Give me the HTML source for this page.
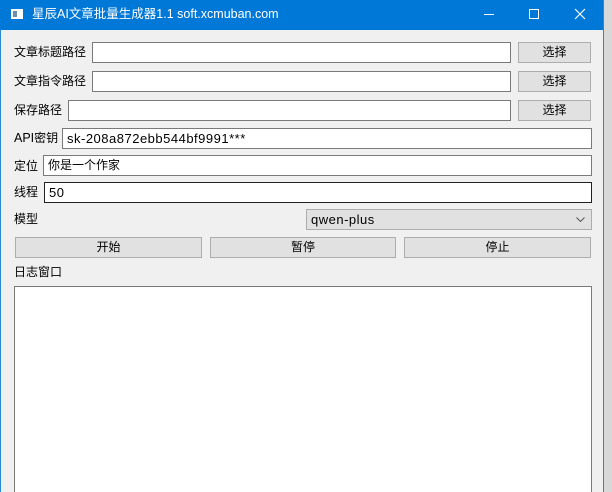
<!DOCTYPE html>
<html style="overflow:hidden;height:492px"><head><meta charset="utf-8"><style>
body{margin:0;width:612px;height:492px;background:#d8d8d8;position:relative;overflow:hidden;font-family:"Liberation Sans","Noto Sans CJK SC",sans-serif;font-size:12px;color:#000}
.win{position:absolute;left:0;top:0;width:602px;height:492px;background:#f0f0f0;border-right:1px solid #2b88d8;border-left:1px solid #2b88d8}
.tb{position:absolute;left:0;top:0;width:603px;height:30px;background:#0078d7;color:#fff}
.a{position:absolute}
.in{position:absolute;background:#fff;border:1px solid #7a7a7a;box-sizing:border-box;height:21px;line-height:19px;padding-left:4px;font-size:12px}
.lt{font-size:13px;letter-spacing:0.5px}
.bt{position:absolute;background:#e1e1e1;border:1px solid #adadad;box-sizing:border-box;height:21px;line-height:19px;text-align:center}
.lb{position:absolute;line-height:16px}
</style></head><body>
<div class="win"></div>
<div class="tb">
 <div class="a" style="left:11px;top:9px;width:12px;height:10px;background:#fff"></div>
 <div class="a" style="left:13px;top:11px;width:4px;height:6px;background:#6a8fb0"></div>
 <div class="a" style="left:32px;top:6px;font-size:12.5px;line-height:17px">星辰AI文章批量生成器1.1 soft.xcmuban.com</div>
 <div class="a" style="left:484px;top:14px;width:10px;height:1px;background:#fff"></div>
 <div class="a" style="left:529px;top:9px;width:8px;height:8px;border:1px solid #fff"></div>
 <svg class="a" style="left:574px;top:8px" width="12" height="12"><path d="M1 1L11 11M11 1L1 11" stroke="#fff" stroke-width="1.2"/></svg>
</div>
<div class="lb" style="left:14px;top:44px">文章标题路径</div>
<div class="in" style="left:92px;top:42px;width:419px"></div>
<div class="bt" style="left:518px;top:42px;width:73px">选择</div>
<div class="lb" style="left:14px;top:73px">文章指令路径</div>
<div class="in" style="left:92px;top:71px;width:419px"></div>
<div class="bt" style="left:518px;top:71px;width:73px">选择</div>
<div class="lb" style="left:14px;top:102px">保存路径</div>
<div class="in" style="left:68px;top:100px;width:443px"></div>
<div class="bt" style="left:518px;top:100px;width:73px">选择</div>
<div class="lb" style="left:14px;top:130px"><span style="font-size:12.5px">API</span>密钥</div>
<div class="in lt" style="left:62px;top:128px;width:530px">sk-208a872ebb544bf9991***</div>
<div class="lb" style="left:14px;top:158px">定位</div>
<div class="in" style="left:43px;top:155px;width:549px">你是一个作家</div>
<div class="lb" style="left:14px;top:184px">线程</div>
<div class="in lt" style="left:44px;top:182px;width:548px;border-color:#222">50</div>
<div class="lb" style="left:14px;top:211px">模型</div>
<div class="bt lt" style="left:306px;top:209px;width:286px;text-align:left;padding-left:4px">qwen-plus<svg class="a" style="right:6px;top:7px" width="9" height="6"><path d="M0.5 0.5L4.5 4.5L8.5 0.5" stroke="#555" fill="none"/></svg></div>
<div class="bt" style="left:15px;top:237px;width:187px">开始</div>
<div class="bt" style="left:210px;top:237px;width:186px">暂停</div>
<div class="bt" style="left:404px;top:237px;width:187px">停止</div>
<div class="lb" style="left:14px;top:264px">日志窗口</div>
<div class="a" style="left:14px;top:286px;width:576px;height:210px;background:#fff;border:1px solid #7a7a7a"></div>
</body></html>
